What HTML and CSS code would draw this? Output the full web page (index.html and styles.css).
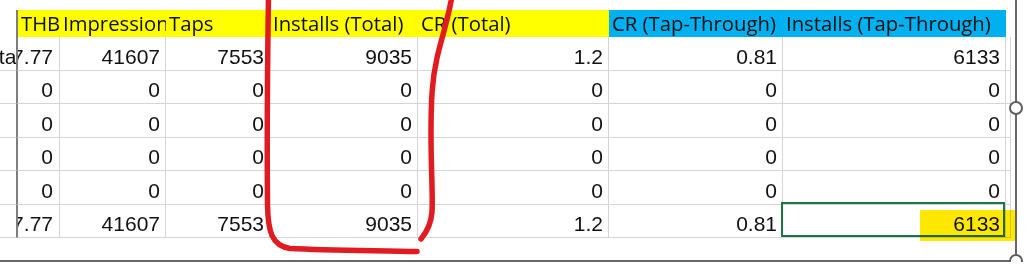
FILE: index.html
```html
<!DOCTYPE html>
<html lang="en">
<head>
<meta charset="utf-8">
<title>Sheet</title>
<link rel="stylesheet" href="styles.css">
</head>
<body>
<div class="frame">
  <div class="sheet">
    <div class="hc blank"></div>
    <div class="hc yel c1">THB</div>
    <div class="hc yel">Impressions</div>
    <div class="hc yel">Taps</div>
    <div class="hc yel">Installs (Total)</div>
    <div class="hc yel">CR (Total)</div>
    <div class="hc blu">CR (Tap-Through)</div>
    <div class="hc blu">Installs (Tap-Through)</div>
    <div class="hc blank"></div>

    <div class="dc c0"><span class="lbl">Total</span></div>
    <div class="dc c1">37.77</div>
    <div class="dc">41607</div>
    <div class="dc">7553</div>
    <div class="dc">9035</div>
    <div class="dc">1.2</div>
    <div class="dc">0.81</div>
    <div class="dc">6133</div>
    <div class="dc c8"></div>

    <div class="dc c0"></div>
    <div class="dc c1">0</div>
    <div class="dc">0</div>
    <div class="dc">0</div>
    <div class="dc">0</div>
    <div class="dc">0</div>
    <div class="dc">0</div>
    <div class="dc">0</div>
    <div class="dc c8"></div>

    <div class="dc c0"></div>
    <div class="dc c1">0</div>
    <div class="dc">0</div>
    <div class="dc">0</div>
    <div class="dc">0</div>
    <div class="dc">0</div>
    <div class="dc">0</div>
    <div class="dc">0</div>
    <div class="dc c8"></div>

    <div class="dc c0"></div>
    <div class="dc c1">0</div>
    <div class="dc">0</div>
    <div class="dc">0</div>
    <div class="dc">0</div>
    <div class="dc">0</div>
    <div class="dc">0</div>
    <div class="dc">0</div>
    <div class="dc c8"></div>

    <div class="dc c0"></div>
    <div class="dc c1">0</div>
    <div class="dc">0</div>
    <div class="dc">0</div>
    <div class="dc">0</div>
    <div class="dc">0</div>
    <div class="dc">0</div>
    <div class="dc">0</div>
    <div class="dc c8"></div>

    <div class="dc c0"></div>
    <div class="dc c1">37.77</div>
    <div class="dc">41607</div>
    <div class="dc">7553</div>
    <div class="dc">9035</div>
    <div class="dc">1.2</div>
    <div class="dc">0.81</div>
    <div class="dc selected">6133</div>
    <div class="dc c8"></div>
  </div>

  <span class="marker"></span>

  <svg class="ink" width="1027" height="271" viewBox="0 0 1027 271">
    <path class="red" d="M268.5,-4 C267.5,60 267,150 267.5,205 C268,232 272,246 290,248.5 C330,250.5 380,250.5 417,251.5"/>
    <path class="red" d="M452,-4 C448,20 441,40 437,58 C432,80 431,100 431,135 C431,170 433,195 432,212 C431,225 426,233 421,239"/>
    <circle class="handle" cx="1016" cy="108" r="6"/>
    <circle class="handle" cx="1016" cy="261" r="6"/>
  </svg>
</div>
</body>
</html>
```

FILE: styles.css
```css
html, body {
  margin: 0;
  padding: 0;
  background: #ffffff;
}

.frame {
  position: relative;
  width: 1015px;
  height: 260px;
  border-right: 2px solid #666666;
  border-bottom: 2px solid #666666;
  overflow: visible;
}

.sheet {
  padding-top: 10px;
  display: grid;
  grid-template-columns: 16px 44px 106px 104px 148px 191px 174px 223px 5px;
  grid-template-rows: 27px 34px 33px 34px 33px 34px 33px;
}

.hc {
  box-sizing: border-box;
  font-family: "Open Sans", "Liberation Sans", sans-serif;
  font-size: 20.3px;
  line-height: 27px;
  color: #0f0f0f;
  white-space: nowrap;
  overflow: hidden;
  padding-left: 3px;
}

.hc.blank {
  background: #ffffff;
}

.yel {
  background: #ffff00;
}

.blu {
  background: #00b0f0;
}

.dc {
  box-sizing: border-box;
  display: flex;
  justify-content: flex-end;
  align-items: flex-end;
  overflow: hidden;
  white-space: nowrap;
  font-family: "Liberation Sans", Arial, sans-serif;
  font-size: 21px;
  line-height: 24px;
  color: #111111;
  padding-right: 5px;
  padding-bottom: 1px;
  border-bottom: 1px solid #d4d4d4;
  border-right: 1px solid #d4d4d4;
}

.c0 {
  border-right: none;
  padding-right: 0;
}

.lbl {
  margin-right: -5px;
}

.c1 {
  border-left: 2px solid #7e7e7e;
  padding-right: 6px;
}

.c8 {
  padding-right: 0;
}

.selected {
  position: relative;
  overflow: visible;
}

.selected::after {
  content: "";
  position: absolute;
  left: -2px;
  top: -3px;
  right: 0;
  bottom: 0;
  border: 2px solid #1f7244;
}

.marker {
  position: absolute;
  left: 920px;
  top: 210px;
  width: 95px;
  height: 31px;
  background: #ffe800;
  mix-blend-mode: multiply;
  border-radius: 1px;
}

.ink {
  position: absolute;
  left: 0;
  top: 0;
  overflow: visible;
  pointer-events: none;
}

.red {
  fill: none;
  stroke: #e11b22;
  stroke-width: 5.5;
  stroke-linecap: round;
  stroke-linejoin: round;
}

.handle {
  fill: #ffffff;
  stroke: #5e5e5e;
  stroke-width: 2;
}
```
